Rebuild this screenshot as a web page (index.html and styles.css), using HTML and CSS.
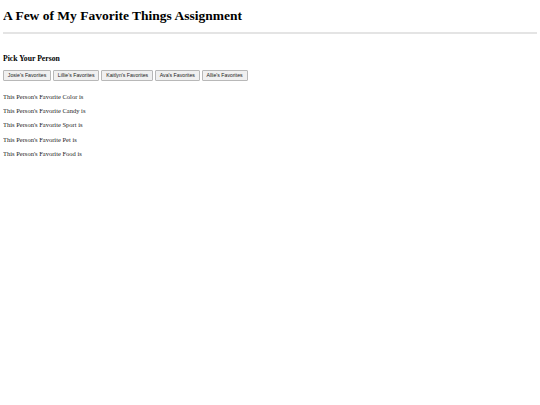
FILE: index.html
```html
<!DOCTYPE html>
<html>
<head>
<meta charset="utf-8">
<link rel="stylesheet" href="styles.css">
</head>
<body class="page">
<h1 class="title">A Few of My Favorite Things Assignment</h1>
<hr class="rule">
<h4 class="pick">Pick Your Person</h4>
<div class="buttons">
<button class="btn">Josie's Favorites</button>
<button class="btn">Lillie's Favorites</button>
<button class="btn">Kaitlyn's Favorites</button>
<button class="btn">Ava's Favorites</button>
<button class="btn">Allie's Favorites</button>
</div>
<p class="fav">This Person's Favorite Color is</p>
<p class="fav">This Person's Favorite Candy is</p>
<p class="fav">This Person's Favorite Sport is</p>
<p class="fav">This Person's Favorite Pet is</p>
<p class="fav">This Person's Favorite Food is</p>
</body>
</html>
```
FILE: styles.css
```css
html, body { background: #fff; }
.page {
  margin: 3px;
  font-family: "Liberation Serif", "Times New Roman", serif;
  color: #000;
}
.title {
  font-size: 13.5px;
  font-weight: bold;
  margin: 3px 0 0 0;
  line-height: 20px;
}
.rule {
  border: none;
  border-top: 2px solid #e4e4e4;
  margin: 6px 0 0 0;
  height: 0;
}
.pick {
  font-size: 7.7px;
  font-weight: bold;
  margin: 20px 0 0 0;
  line-height: 10px;
}
.buttons {
  display: flex;
  gap: 2px;
  margin-top: 6px;
}
.btn {
  font-family: "Liberation Sans", Arial, sans-serif;
  font-size: 5.2px;
  line-height: 7px;
  padding: 1px 3.8px;
  background: #f0f0f0;
  border: 1px solid #b8b8b8;
  border-radius: 1px;
  color: #222;
}
.fav {
  font-size: 6.5px;
  line-height: 9px;
  margin: 5.2px 0 0 0;
  color: #222;
}
.buttons + .fav { margin-top: 11px; }
```
